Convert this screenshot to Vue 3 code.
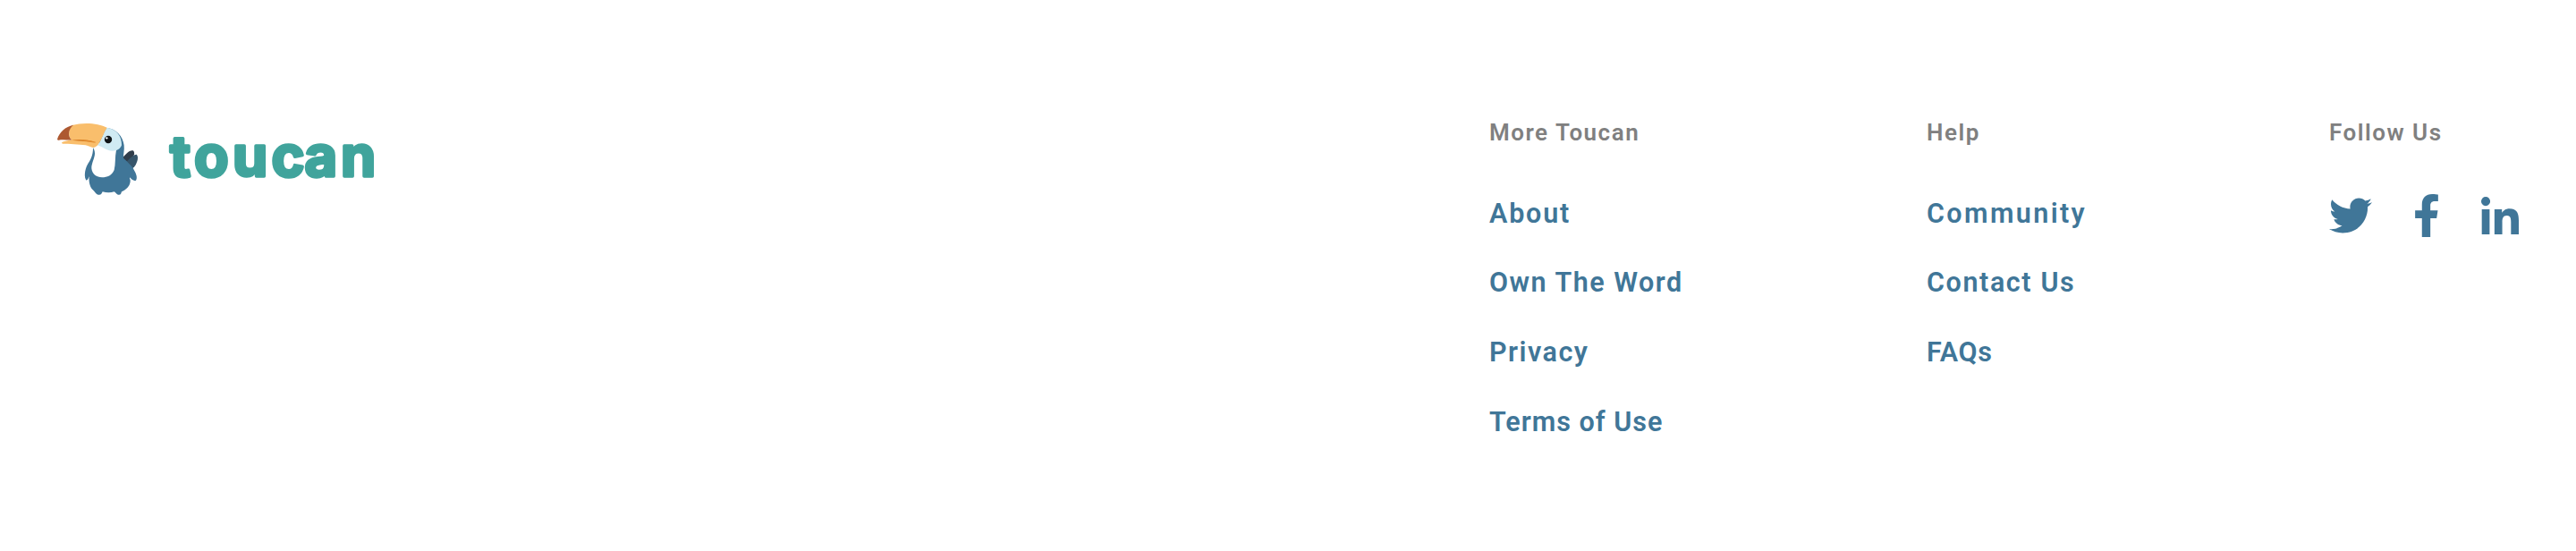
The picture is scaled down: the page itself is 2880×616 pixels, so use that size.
<template>
  <footer class="footer">
    <a class="brand" aria-label="toucan">
      <svg class="brand-bird" viewBox="0 0 360 300">
        <path d="M258 160C268 144 284 128 296 130C300 133 301 138 300 143L284 176Z" fill="#303d4b" />
        <path d="M270 172C284 156 300 142 308 143C315 150 313 166 301 184L284 200Z" fill="#36556b" />
        <path
          d="M205 54C240 54 262 84 266 112C268 128 263 143 264 155C276 167 293 181 299 194C307 207 312 221 306 230C298 233 291 226 285 220C284 226 288 226 287 234C285 251 272 262 258 268C256 274 255 280 246 278C240 276 238 270 233 268C221 272 207 272 194 268C190 277 187 280 179 278C172 276 169 269 163 263C153 256 147 237 149 217C146 221 146 228 140 230C131 221 134 195 143 178C151 164 163 150 162 118Z"
          fill="#407698"
        />
        <path
          d="M161 119C170 116 177 111 182 104L240 128C235 153 238 176 233 195C226 213 210 220 192 220C174 219 159 210 157 190C156 174 168 154 168 140C168 132 166 124 161 119Z"
          fill="#fff"
        />
        <path
          d="M208 53C240 57 259 81 258 112C253 126 240 132 226 131C207 130 194 116 178 113C188 98 195 73 208 53Z"
          fill="#d0ebf3"
        />
        <path
          d="M92 45C130 34 181 38 209 53C195 74 188 106 170 118C158 124 151 115 137 112C115 108 82 108 60 107C55 105 57 101 64 100L89 94C79 82 78 60 92 45Z"
          fill="#f9be6c"
        />
        <path d="M96 44C69 50 49 68 42 92C44 97 49 95 54 94C66 92 79 96 90 94C77 82 78 59 96 44Z" fill="#ad5931" />
        <path d="M90 95C119 91 145 94 174 102C142 99 119 98 90 95Z" fill="#d98127" />
        <path d="M123 95C143 94 157 97 173 104C155 102 140 99 123 95Z" fill="#e28b2e" />
        <circle cx="213" cy="93" r="12.5" fill="#101517" />
        <circle cx="208" cy="88" r="3.5" fill="#fff" />
      </svg>
      <svg class="brand-name" viewBox="0 0 240 64">
        <text y="49.5" x="5 32 75 118.5 155.5 196">toucan</text>
      </svg>
    </a>

    <nav class="links">
      <section v-for="group in groups" :key="group.title" class="group" :class="group.name">
        <h2 class="title">{{ group.title }}</h2>
        <ul class="list">
          <li v-for="item in group.items" :key="item.label">
            <a class="link" :style="{ letterSpacing: item.spacing + 'px' }">{{ item.label }}</a>
          </li>
        </ul>
      </section>

      <section class="group follow">
        <h2 class="title">Follow Us</h2>
        <div class="socials">
          <a v-for="icon in socials" :key="icon.name" :aria-label="icon.name">
            <svg class="social-icon" :class="icon.name" :viewBox="icon.viewBox">
              <path :d="icon.path" />
            </svg>
          </a>
        </div>
      </section>
    </nav>
  </footer>
</template>

<script setup>
const groups = [
  {
    name: "more",
    title: "More Toucan",
    items: [
      { label: "About", spacing: 1.8 },
      { label: "Own The Word", spacing: 1.5 },
      { label: "Privacy", spacing: 1.5 },
      { label: "Terms of Use", spacing: 1 },
    ],
  },
  {
    name: "help",
    title: "Help",
    items: [
      { label: "Community", spacing: 2.4 },
      { label: "Contact Us", spacing: 1.6 },
      { label: "FAQs", spacing: 0.7 },
    ],
  },
];

const socials = [
  {
    name: "twitter",
    viewBox: "0 0 512 512",
    path: "M459.37 151.716c.325 4.548.325 9.097.325 13.645 0 138.72-105.583 298.558-298.558 298.558-59.452 0-114.68-17.219-161.137-47.106 8.447.974 16.568 1.299 25.34 1.299 49.055 0 94.213-16.568 130.274-44.832-46.132-.975-84.792-31.188-98.112-72.772 6.498.974 12.995 1.624 19.818 1.624 9.421 0 18.843-1.3 27.614-3.573-48.081-9.747-84.143-51.98-84.143-102.985v-1.299c13.969 7.797 30.214 12.67 47.431 13.319-28.264-18.843-46.781-51.005-46.781-87.391 0-19.492 5.197-37.36 14.294-52.954 51.655 63.675 129.3 105.258 216.365 109.807-1.624-7.797-2.599-15.918-2.599-24.04 0-57.828 46.782-104.934 104.934-104.934 30.213 0 57.502 12.67 76.67 33.137 23.715-4.548 46.456-13.32 66.599-25.34-7.798 24.366-24.366 44.833-46.132 57.827 21.117-2.273 41.584-8.122 60.426-16.243-14.292 20.791-32.161 39.308-52.628 54.253z",
  },
  {
    name: "facebook",
    viewBox: "0 0 320 512",
    path: "M279.14 288l14.22-92.66h-88.91v-60.13c0-25.35 12.42-50.06 52.24-50.06h40.42V6.26S260.43 0 225.36 0c-73.22 0-121.08 44.38-121.08 124.72v70.62H22.89V288h81.39v224h100.17V288z",
  },
  {
    name: "linkedin",
    viewBox: "0 -32 448 512",
    path: "M100.28 448H7.4V148.9h92.88zM53.79 108.1C24.09 108.1 0 83.5 0 53.8a53.79 53.79 0 0 1 107.58 0c0 29.7-24.1 54.3-53.79 54.3zM447.9 448h-92.68V302.4c0-34.7-.7-79.2-48.29-79.2-48.29 0-55.69 37.7-55.69 76.7V448h-92.78V148.9h89.08v40.8h1.3c12.4-23.5 42.69-48.3 87.88-48.3 94 0 111.28 61.9 111.28 142.3V448z",
  },
];
</script>

<style>
body {
  margin: 0;
  background: #fff;
}
</style>

<style scoped>
.footer {
  display: flex;
  justify-content: space-between;
  box-sizing: border-box;
  height: 616px;
  padding: 125px 62px 0 50px;
  font-family: Roboto, "Liberation Sans", sans-serif;
  color: #407698;
}

.brand {
  display: flex;
  align-items: flex-start;
}

.brand-bird {
  width: 120px;
  height: 100px;
}

.brand-name {
  width: 240px;
  height: 64px;
  margin: 22px 0 0 15px;
  overflow: visible;
  font-family: Inter, sans-serif;
  font-size: 63px;
  font-weight: 700;
  fill: #40a49c;
  stroke: #40a49c;
  stroke-width: 3.5px;
  stroke-linejoin: round;
}

.links {
  display: flex;
}

.group.more {
  width: 489px;
}

.group.help {
  width: 450px;
}

.group.follow {
  width: 214px;
}

.title {
  margin: 6px 0 0;
  font-size: 26px;
  font-weight: 600;
  line-height: 34px;
  letter-spacing: 1.5px;
  color: #808080;
}

.list {
  display: flex;
  flex-direction: column;
  gap: 37.7px;
  margin: 53.5px 0 0;
  padding: 0;
  list-style: none;
}

.link {
  display: block;
  font-size: 30.5px;
  font-weight: 600;
  line-height: 40px;
  white-space: nowrap;
}

.socials {
  display: flex;
  gap: 46px;
  margin-top: 52px;
}

.social-icon {
  display: block;
  height: 48px;
  fill: currentColor;
}

.twitter {
  width: 48px;
}

.facebook {
  width: 30px;
}

.linkedin {
  width: 42px;
}
</style>
